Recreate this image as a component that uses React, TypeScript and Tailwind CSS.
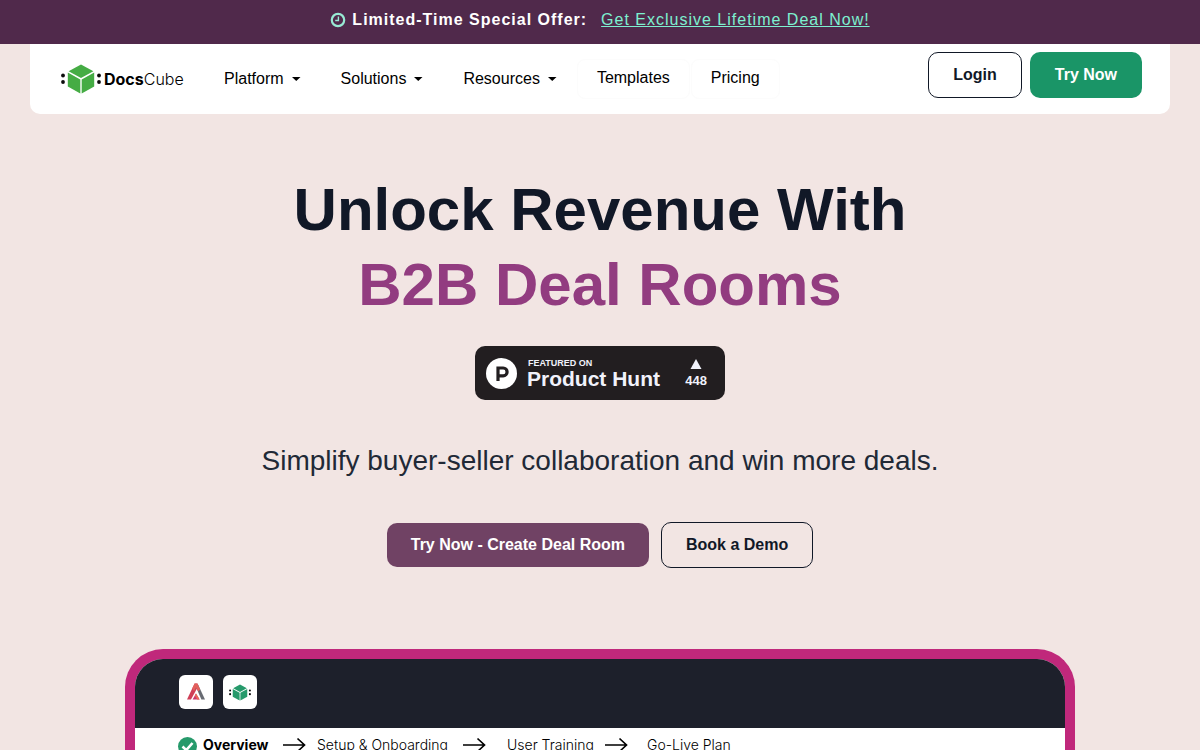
import React from "react";

interface IMenuItem {
    label: string
    href: string
}

const menus: IMenuItem[] = [
    {label: "Platform", href: "#platform"},
    {label: "Solutions", href: "#solutions"},
    {label: "Resources", href: "#resources"},
];

const links: IMenuItem[] = [
    {label: "Templates", href: "#templates"},
    {label: "Pricing", href: "#pricing"},
];

interface ICubeProps {
    className: string
    color: string
}

const Cube: React.FC<ICubeProps> = ({className, color}: ICubeProps) => (
    <svg className={className} viewBox="0 0 40 30" aria-hidden="true">
        <circle cx="2" cy="11.5" r="1.9" fill="#0b0b0b"/>
        <circle cx="2" cy="18" r="1.9" fill="#0b0b0b"/>
        <circle cx="38" cy="11.5" r="1.9" fill="#0b0b0b"/>
        <circle cx="38" cy="18" r="1.9" fill="#0b0b0b"/>
        <path d="M20 0.4L32.4 7.2L20 14L7.6 7.2Z" fill={color}/>
        <path d="M6.8 8.6L19.3 15.6V29.6L6.8 22.6Z" fill={color}/>
        <path d="M33.2 8.6L20.7 15.6V29.6L33.2 22.6Z" fill={color}/>
    </svg>
)

const Arrow: React.FC = () => (
    <svg className="h-4 w-6 shrink-0" viewBox="0 0 24 16" fill="none" stroke="#000" strokeWidth="1.7" aria-hidden="true">
        <path d="M0 8H21.5M14.5 1.5L21.5 8L14.5 14.5"/>
    </svg>
)

const Banner: React.FC = () => (
    <div className="flex h-11 items-center justify-center bg-[#50294b] pb-1 text-base tracking-[1px]">
        <svg className="mr-1.5 h-4 w-4" viewBox="0 0 16 16" fill="none" stroke="#98ead4" aria-hidden="true">
            <circle cx="8" cy="8" r="6.2" strokeWidth="2.2"/>
            <path d="M8.4 4.4V8.5H5.2" strokeWidth="1.4"/>
        </svg>
        <strong className="mr-3.5 font-bold text-white">Limited-Time Special Offer:</strong>
        <a className="text-[#7df0d0] underline" href="#deal">Get Exclusive Lifetime Deal Now!</a>
    </div>
)

const Header: React.FC = () => (
    <header className="mx-[30px] flex h-[70px] justify-between rounded-b-[10px] bg-white pr-7 pl-[31px]">
        <div className="flex items-center">
            <a className="mr-4 flex w-[127px] items-center font-[Inter] text-base text-black" href="#home">
                <Cube className="mr-[3px] h-[30px] w-10 shrink-0" color="#45ac44"/>
                <span><b className="font-bold">Docs</b><span className="font-light">Cube</span></span>
            </a>
            <nav className="flex items-center text-base text-black">
                {
                    menus.map((item) => (
                        <button key={item.label} type="button" className="flex items-center px-5">
                            {item.label}
                            <svg className="ml-2 h-1 w-[9px]" viewBox="0 0 9 4" aria-hidden="true">
                                <path d="M0 0H8.5L4.25 4Z"/>
                            </svg>
                        </button>
                    ))
                }
                {
                    links.map((item) => (
                        <a key={item.label} href={item.href}
                           className="mr-px rounded-lg border border-[#fcfcfc] px-[19px] pt-1.5 pb-2">{item.label}</a>
                    ))
                }
            </nav>
        </div>
        <div className="flex items-start gap-2 pt-2 text-base font-bold">
            <button type="button" className="h-[46px] rounded-[10px] border border-[#111827] px-6 text-[#111827]">Login</button>
            <button type="button" className="h-[46px] rounded-[10px] bg-[#1a9567] px-[25px] text-white">Try Now</button>
        </div>
    </header>
)

const ProductHunt: React.FC = () => (
    <a href="#producthunt"
       className="mt-6 flex h-[54px] w-[250px] items-center rounded-[10px] bg-[#221e20] pr-[18px] pl-[11px] font-bold text-[#f1f2fb]">
        <svg className="h-[31px] w-[31px]" viewBox="0 0 31 31" aria-hidden="true">
            <circle cx="15.5" cy="15.5" r="15.5" fill="#fff"/>
            <path d="M12 23V10H17.2A3.9 3.9 0 0 1 17.2 17.8H12" fill="none" stroke="#221e20" strokeWidth="3.2"/>
        </svg>
        <div className="ml-2.5 flex-1 pt-0.5 text-left">
            <p className="pl-px text-[9px] leading-[10px]">FEATURED ON</p>
            <p className="text-[21px] leading-[22px]">Product Hunt</p>
        </div>
        <div className="flex flex-col items-center pt-0.5 text-[13px] leading-4">
            <svg className="mb-1 h-2.5 w-3" viewBox="0 0 12 10" aria-hidden="true">
                <path d="M6 0L11.5 10H0.5Z" fill="currentColor"/>
            </svg>
            448
        </div>
    </a>
)

const Hero: React.FC = () => (
    <section className="flex flex-col items-center px-8 pt-[58px] text-center">
        <h1 className="text-6xl leading-[75px] font-bold text-[#111827]">
            Unlock Revenue With
            <span className="block text-[#923c80]">B2B Deal Rooms</span>
        </h1>
        <ProductHunt/>
        <p className="mt-10 text-[28px] leading-[42px] text-[#212936]">
            Simplify buyer-seller collaboration and win more deals.
        </p>
        <div className="mt-10 flex items-center gap-3 text-base font-bold">
            <button type="button" className="h-11 rounded-[10px] bg-[#704264] px-6 text-white">Try Now - Create Deal Room</button>
            <button type="button" className="h-[46px] rounded-[10px] border border-[#111827] px-6 text-[#111827]">Book a Demo</button>
        </div>
    </section>
)

const DealRoom: React.FC = () => (
    <section className="mx-auto mt-[81px] w-[calc(100%-250px)] overflow-hidden rounded-t-[38px] border-x-10 border-t-10 border-[#c0287b] bg-white">
        <div className="flex h-[69px] gap-2.5 bg-[#1d202b] pt-4 pl-11">
            <div className="flex h-[34px] w-[34px] items-center justify-center rounded-md bg-white">
                <svg className="h-5 w-5" viewBox="0 0 20 20" fill="none" aria-hidden="true">
                    <path d="M1 17.5L8.6 1.5H11.4L12.4 4L5 17.5Z" fill="#cf3f58"/>
                    <path d="M10 5L12 2.5L19 17.5H15.4Z" fill="#686b73"/>
                    <path d="M8.6 1.5H11.4L14.2 7.5L12.2 9.5L10 5.6L8 9L6.2 6.6Z" fill="#e2605c"/>
                    <path d="M6.6 17.5L10 11.5L13.6 17.5Z" fill="#c93770"/>
                    <path d="M10 11.5L13.6 17.5H11.2L8.8 13.6Z" fill="#e96a58"/>
                </svg>
            </div>
            <div className="flex h-[34px] w-[34px] items-center justify-center rounded-md bg-white">
                <Cube className="h-[17px] w-[22px]" color="#269a6b"/>
            </div>
        </div>
        <div className="flex h-12 items-start pt-[7px] pl-[43px] font-[Inter] text-sm leading-5 whitespace-nowrap text-black">
            <svg className="mt-0.5 mr-1.5 h-[19px] w-[19px] shrink-0" viewBox="0 0 19 19" fill="none" aria-hidden="true">
                <circle cx="9.5" cy="9.5" r="9.5" fill="#269a6b"/>
                <path d="M4.5 9.5L8.3 13.2L14.5 6" stroke="#fff" strokeWidth="2.6"/>
            </svg>
            <div className="flex flex-1 items-center">
                <b className="mr-4 w-16 font-bold">Overview</b>
                <Arrow/>
                <span className="mr-4 ml-2.5 w-[130px] font-light">Setup &amp; Onboarding</span>
                <Arrow/>
                <span className="mr-4 ml-5 w-[82px] font-light">User Training</span>
                <Arrow/>
                <span className="ml-[18px] font-light">Go-Live Plan</span>
            </div>
        </div>
    </section>
)

const App: React.FC = () => (
    <div className="min-h-screen bg-[#f2e5e3] font-['Liberation_Sans',Arial,sans-serif]">
        <Banner/>
        <Header/>
        <main>
            <Hero/>
            <DealRoom/>
        </main>
    </div>
)

export default App;
